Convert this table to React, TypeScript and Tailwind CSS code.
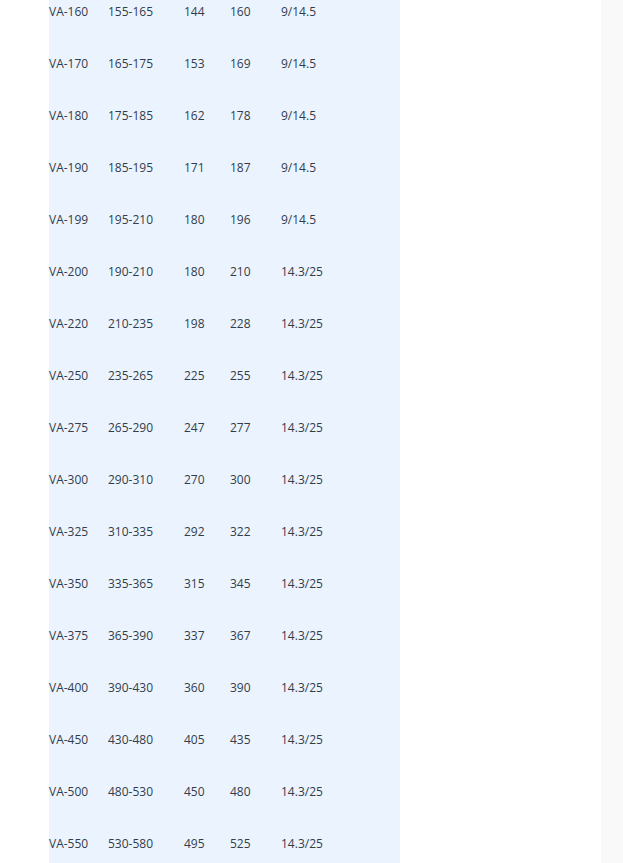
const rows = [
  ["VA-160", "155-165", "144", "160", "9/14.5"],
  ["VA-170", "165-175", "153", "169", "9/14.5"],
  ["VA-180", "175-185", "162", "178", "9/14.5"],
  ["VA-190", "185-195", "171", "187", "9/14.5"],
  ["VA-199", "195-210", "180", "196", "9/14.5"],
  ["VA-200", "190-210", "180", "210", "14.3/25"],
  ["VA-220", "210-235", "198", "228", "14.3/25"],
  ["VA-250", "235-265", "225", "255", "14.3/25"],
  ["VA-275", "265-290", "247", "277", "14.3/25"],
  ["VA-300", "290-310", "270", "300", "14.3/25"],
  ["VA-325", "310-335", "292", "322", "14.3/25"],
  ["VA-350", "335-365", "315", "345", "14.3/25"],
  ["VA-375", "365-390", "337", "367", "14.3/25"],
  ["VA-400", "390-430", "360", "390", "14.3/25"],
  ["VA-450", "430-480", "405", "435", "14.3/25"],
  ["VA-500", "480-530", "450", "480", "14.3/25"],
  ["VA-550", "530-580", "495", "525", "14.3/25"],
];

export default function App() {
  return (
    <div className="flex h-[863px] w-[623px] overflow-hidden bg-white font-['Open_Sans',sans-serif]">
      <div className="w-[49px] shrink-0" />
      <div className="w-[351px] shrink-0 bg-[#ebf4fe]">
        {rows.map((r) => (
          <div key={r[0]} className="flex h-[52px] pt-[3px] text-[12px] leading-[18px] text-[#333c4a]">
            <div className="w-[59px]">{r[0]}</div>
            <div className="w-[76px]">{r[1]}</div>
            <div className="w-[46px]">{r[2]}</div>
            <div className="w-[51px]">{r[3]}</div>
            <div>{r[4]}</div>
          </div>
        ))}
      </div>
      <div className="w-[201px] shrink-0" />
      <div className="flex-1 bg-[#f9f9f9]" />
    </div>
  );
}
